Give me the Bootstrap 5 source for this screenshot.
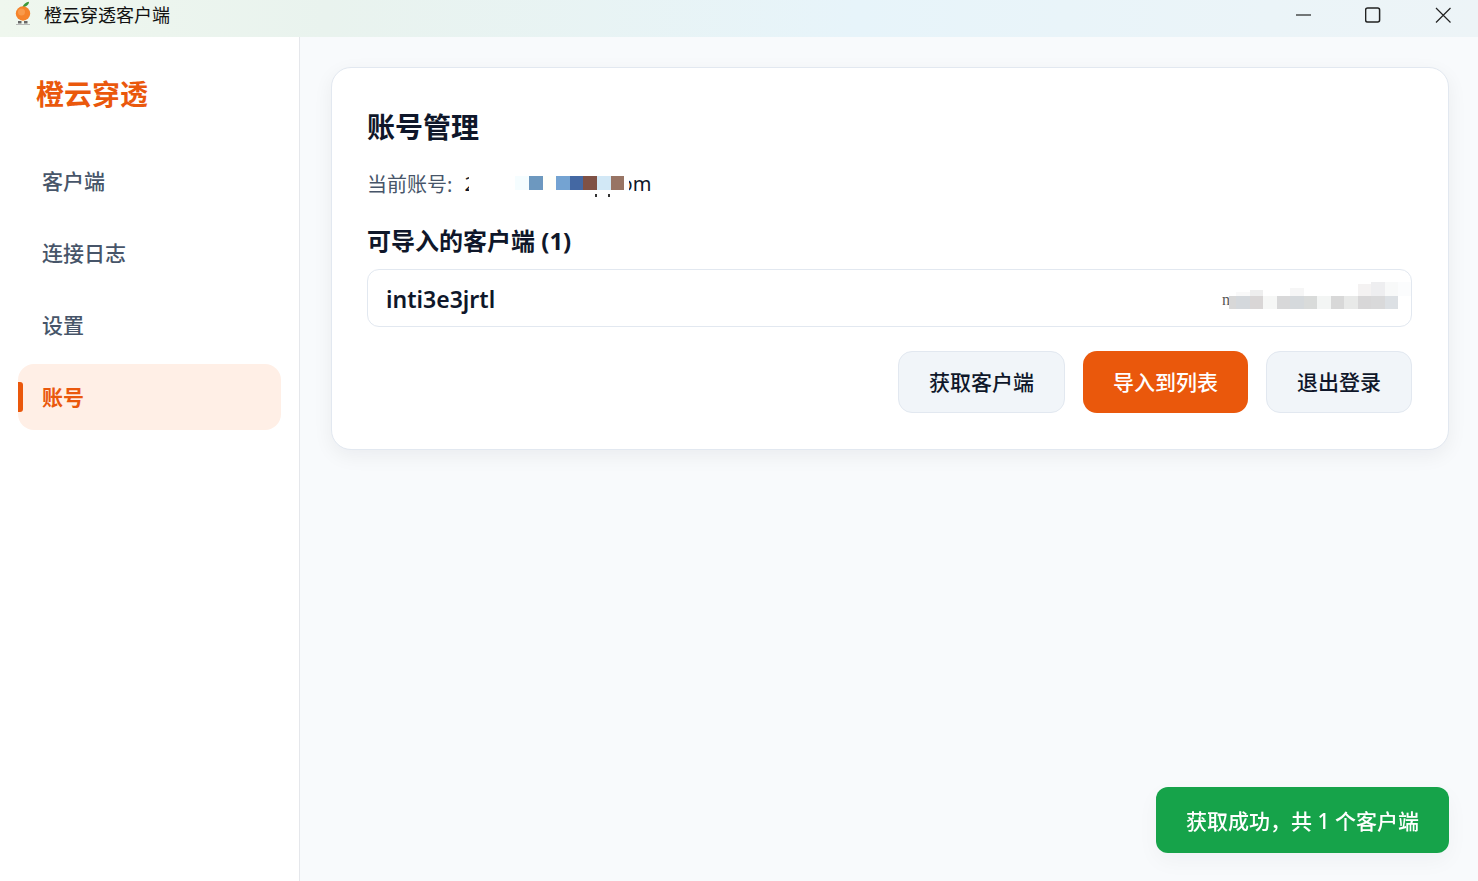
<!DOCTYPE html>
<html lang="zh-CN">
<head>
<meta charset="utf-8">
<title>橙云穿透客户端</title>
<link href="https://cdn.jsdelivr.net/npm/bootstrap@5.3.0/dist/css/bootstrap.min.css" rel="stylesheet">
<style>
html,body{height:100%;overflow:hidden}
body{font-family:"Noto Sans","Noto Sans CJK SC",sans-serif;background:#f8fafc;color:#0f172a}
.app-frame{height:881px;width:1478px}
.title-strip{height:37px;padding-bottom:7px;background:linear-gradient(90deg,#eff7ee 0%,#e9f3ee 22%,#e7f4fa 58%,#edf4f7 100%);flex:none}
.title-logo{width:22px;height:28px;margin-left:12px;margin-right:10px;flex:none}
.title-name{font-size:18px;line-height:30px;color:#111}
.win-btn{width:70px;height:30px;border:0;background:transparent;padding:0;display:flex;align-items:center;justify-content:center}
.body-zone{min-height:0}
.side-pane{width:300px;background:#fff;border-right:1px solid #e5e7eb;padding:0 18px;flex:none}
.brand-name{font-size:28px;font-weight:700;line-height:40px;color:#ea580c;margin:37px 0 0 18px}
.side-nav{margin-top:34px;gap:6px}
.side-link{position:relative;height:66px;width:263px;border-radius:16px;padding:1px 24px 0;font-size:21px;line-height:65px;color:#475569;font-weight:500;text-decoration:none;display:block}
.side-link.is-active{background:#ffefe6;color:#ea580c;font-weight:600}
.side-link.is-active::before{content:"";position:absolute;left:0;top:18px;width:5px;height:30px;background:#ea580c;border-radius:0 3px 3px 0}
.main-pane{background:#f8fafc;padding:30px 29px 0 31px}
.acct-panel{height:383px;border:1px solid #e2e8f0;border-radius:20px;background:#fff;box-shadow:0 6px 20px rgba(15,23,42,.06);padding:37px 36px 0 35px}
.panel-title{font-size:28px;font-weight:700;line-height:44px;margin:0;color:#0f172a}
.acct-line{font-size:20px;line-height:28px;color:#475569;margin-top:22px;height:28px}
.acct-mail{position:relative;display:inline-block;width:187px;height:28px;vertical-align:top;margin-left:12px;color:#0f172a;font-size:20px;overflow:hidden}
.acct-frag{position:absolute;left:0;top:-1px}
.acct-end{position:absolute;right:0;top:-1px}
.acct-cover{position:absolute;left:5px;right:22px;top:0;bottom:0;background:#fff}
.mosaic-strip{position:absolute;display:flex}
.mosaic-strip i{display:block;height:100%;flex:none}
.strip-a{left:51px;top:5px;height:14px}
.strip-a i{width:13.6px}
.pin-dot{position:absolute;top:23px;width:2px;height:3px;background:#333}
.list-heading{font-size:24px;font-weight:700;line-height:36px;margin:24px 0 0;color:#0f172a}
.client-box{position:relative;height:58px;margin-top:10px;border:1px solid #e2e8f0;border-radius:12px;padding:0 18px;overflow:hidden}
.client-name{font-size:23px;font-weight:600;line-height:58px;color:#0f172a}
.client-addr{position:absolute;left:854px;top:18px;font-family:"Liberation Serif",serif;font-size:16px;color:#555}
.strip-b{left:861px;top:26px;height:13px}
.strip-c{left:861px;top:6px;height:20px;align-items:flex-end}
.strip-b i,.strip-c i{width:13.5px}
.strip-b i:first-child,.strip-c i:first-child{width:7px}
.action-row{gap:18px;margin-top:24px}
.act-btn{height:62px;font-size:21px;font-weight:500;border-radius:14px;padding:0 30px;line-height:60px;--bs-btn-color:#0f172a;--bs-btn-bg:#f1f5f9;--bs-btn-border-color:#e2e8f0;--bs-btn-hover-bg:#e9eef5;--bs-btn-hover-border-color:#e2e8f0;--bs-btn-hover-color:#0f172a}
.act-main{--bs-btn-border-width:0;--bs-btn-color:#fff;--bs-btn-bg:#ea580c;--bs-btn-border-color:#ea580c;--bs-btn-hover-bg:#ea580c;--bs-btn-hover-border-color:#ea580c;--bs-btn-hover-color:#fff}
.notice-pop{position:fixed;right:29px;bottom:28px;height:66px;border-radius:12px;background:#16a34a;color:#fff;font-size:21px;font-weight:500;line-height:68px;padding:0 30px;box-shadow:0 8px 22px rgba(15,23,42,.04)}
</style>
</head>
<body>
<div class="app-frame d-flex flex-column">
  <header class="title-strip d-flex align-items-center">
    <svg class="title-logo" viewBox="0 0 22 28" aria-hidden="true">
      <path d="M10.500 6C11.500 3 14 1.200 17 .8C17 3.500 14.500 5.800 11 6.200Z" fill="#3d9a3a"/>
      <circle cx="11" cy="12.500" r="7.200" fill="#f5832a"/>
      <circle cx="9.500" cy="11" r="3.500" fill="#f99a4a"/>
      <rect x="6" y="20" width="3.500" height="2.500" fill="#666"/>
      <rect x="12" y="20" width="3.500" height="2.500" fill="#666"/>
      <rect x="4" y="23" width="14" height=".8" fill="#aaa"/>
    </svg>
    <span class="title-name">橙云穿透客户端</span>
    <div class="ms-auto d-flex">
      <button class="win-btn" type="button" aria-label="最小化"><svg width="16" height="16" viewBox="0 0 16 16"><path d="M1 8H16" stroke="#222" stroke-width="1.200"/></svg></button>
      <button class="win-btn" type="button" aria-label="最大化"><svg width="16" height="16" viewBox="0 0 16 16"><rect x=".6" y="1" width="14" height="14" rx="2" fill="none" stroke="#222" stroke-width="1.500"/></svg></button>
      <button class="win-btn" type="button" aria-label="关闭"><svg width="16" height="16" viewBox="0 0 16 16"><path d="M1 1L15.500 15.500M15.500 1L1 15.500" stroke="#222" stroke-width="1.200"/></svg></button>
    </div>
  </header>
  <div class="body-zone d-flex flex-grow-1">
    <aside class="side-pane">
      <div class="brand-name">橙云穿透</div>
      <nav class="side-nav d-flex flex-column">
        <a class="side-link" href="#">客户端</a>
        <a class="side-link" href="#">连接日志</a>
        <a class="side-link" href="#">设置</a>
        <a class="side-link is-active" href="#">账号</a>
      </nav>
    </aside>
    <main class="main-pane flex-grow-1">
      <section class="acct-panel">
        <h1 class="panel-title">账号管理</h1>
        <div class="acct-line">当前账号:<span class="acct-mail"><span class="acct-frag">2</span><span class="acct-end">om</span><span class="acct-cover"></span>
          <span class="mosaic-strip strip-a"><i style="background:#f5fdff"></i><i style="background:#6d98bf"></i><i style="background:#fffffa"></i><i style="background:#74a3d2"></i><i style="background:#4468a3"></i><i style="background:#7f5145"></i><i style="background:#d2e8f6"></i><i style="background:#987464"></i></span>
          <span class="pin-dot" style="left:131px"></span><span class="pin-dot" style="left:144px"></span>
        </span></div>
        <h2 class="list-heading">可导入的客户端 (1)</h2>
        <div class="client-box">
          <span class="client-name">inti3e3jrtl</span>
          <span class="client-addr">n</span>
          <span class="mosaic-strip strip-c"><i style="height:0"></i><i style="height:4px;background:#f9f9f9"></i><i style="height:6px;background:#eeeeee"></i><i style="height:0"></i><i style="height:0"></i><i style="height:8px;background:#f6f6f6"></i><i style="height:0"></i><i style="height:0"></i><i style="height:0"></i><i style="height:0"></i><i style="height:12px;background:#f4f2f2"></i><i style="height:14px;background:#eeeef0"></i><i style="height:14px;background:#f8f9f9"></i><i style="height:14px;background:#fbfcfd"></i></span>
          <span class="mosaic-strip strip-b"><i style="background:#d8d8d8"></i><i style="background:#d4d8dc"></i><i style="background:#d9d6d6"></i><i style="background:#f6f7f6"></i><i style="background:#d8d8d9"></i><i style="background:#d5d9dc"></i><i style="background:#d9dbda"></i><i style="background:#f3f5f4"></i><i style="background:#d8d8d8"></i><i style="background:#e8e9e8"></i><i style="background:#d8d7d8"></i><i style="background:#d9d9da"></i><i style="background:#dce0e4"></i></span>
        </div>
        <div class="action-row d-flex justify-content-end">
          <button class="btn act-btn" type="button">获取客户端</button>
          <button class="btn act-btn act-main" type="button">导入到列表</button>
          <button class="btn act-btn" type="button">退出登录</button>
        </div>
      </section>
    </main>
  </div>
</div>
<div class="notice-pop">获取成功，共 1 个客户端</div>
<script src="https://cdn.jsdelivr.net/npm/bootstrap@5.3.0/dist/js/bootstrap.bundle.min.js"></script>
</body>
</html>
